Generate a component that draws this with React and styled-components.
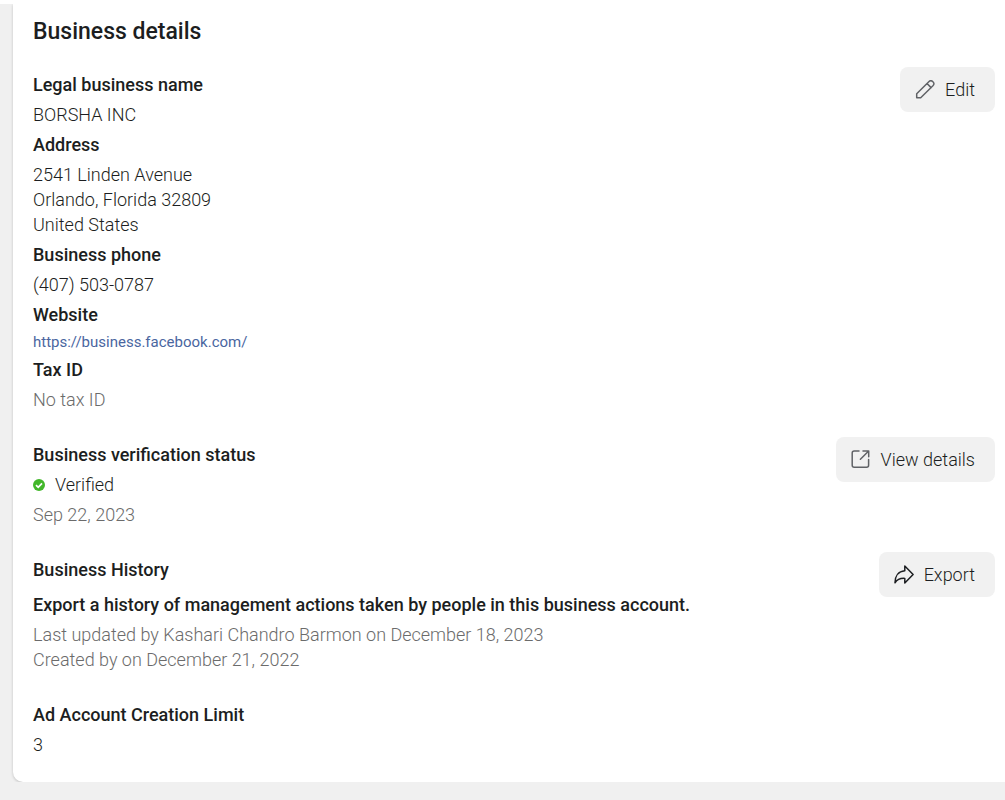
import React from 'react'
import styled, { createGlobalStyle } from 'styled-components'

const App = () => {
  return (
    <>
      <GlobalStyle />
      <Page>
        <Card>
          <Title>Business details</Title>

          <Sections>
            <Section>
              <Details>
                <Label>Legal business name</Label>
                <Text>BORSHA INC</Text>
                <Label>Address</Label>
                <Text>
                  2541 Linden Avenue<br />
                  Orlando, Florida 32809<br />
                  United States
                </Text>
                <Label>Business phone</Label>
                <Text>(407) 503-0787</Text>
                <Label>Website</Label>
                <WebLink href="https://business.facebook.com/">https://business.facebook.com/</WebLink>
                <Label>Tax ID</Label>
                <Text $muted>No tax ID</Text>
              </Details>
              <Button type="button">
                <PencilIcon />
                Edit
              </Button>
            </Section>

            <Section>
              <Details>
                <Label>Business verification status</Label>
                <Status>
                  <VerifiedIcon />
                  Verified
                </Status>
                <Text $muted>Sep 22, 2023</Text>
              </Details>
              <Button type="button">
                <OpenIcon />
                View details
              </Button>
            </Section>

            <Section>
              <Details>
                <Label>Business History</Label>
                <Lead>Export a history of management actions taken by people in this business account.</Lead>
                <Text $muted>
                  Last updated by Kashari Chandro Barmon on December 18, 2023<br />
                  Created by on December 21, 2022
                </Text>
              </Details>
              <Button type="button">
                <ShareIcon />
                Export
              </Button>
            </Section>

            <Section>
              <Details>
                <Label>Ad Account Creation Limit</Label>
                <Text>3</Text>
              </Details>
            </Section>
          </Sections>
        </Card>
      </Page>
    </>
  )
}

const PencilIcon = () => (
  <Icon viewBox="0 0 20 20" aria-hidden="true" $color="#606266">
    <path d="M1.7 17.8v-4.1L13.8 1.7q2-1.9 4.1 0t0 4.1L5.7 17.8zM12 3.5l4.1 4.1" />
  </Icon>
)

const OpenIcon = () => (
  <Icon viewBox="0 0 20 20" aria-hidden="true" $color="#606266">
    <path d="M8 1H3.200Q1.200 1 1.200 3v12.300q0 2 2 2h12.400q2 0 2-2V9.500M12 1h5.700v5.700M17.700 1l-8.300 8.300" />
  </Icon>
)

const ShareIcon = () => (
  <Icon viewBox="0 0 20 20" aria-hidden="true" $color="#1c1e21">
    <path d="M10.8 1l8.3 8.500-8.300 8.500v-4.600C5.800 13.100 3.200 14.300 1 17.800 1 11 4.500 6.300 10.800 5.800z" />
  </Icon>
)

const VerifiedIcon = () => (
  <Badge viewBox="0 0 12 12" aria-hidden="true">
    <circle cx="6" cy="6" r="6" fill="#42b72a" />
    <path d="M3 6.2l2.200 2.100L9 4.300" fill="none" stroke="#fff" strokeWidth="1.7" />
  </Badge>
)

const GlobalStyle = createGlobalStyle`
  body {
    margin: 0;
    background-color: #f0f0f0;
    font-family: Roboto, "Liberation Sans", sans-serif;
    color: #1c1e21;
  }
`

const Page = styled.main`
  border-top: 4px solid #ffffff;
  padding-left: 13px;
`

const Card = styled.div`
  padding: 15px 10px 25px 20px;
  border-radius: 0 0 0 10px;
  background-color: #ffffff;
  box-shadow: 0 1px 3px rgb(0 0 0 / 20%);
  clip-path: inset(0 0 -6px -6px);
`

const Title = styled.h1`
  margin: 0 0 22px;
  font-size: 23px;
  font-weight: 500;
  line-height: 26px;
`

const Sections = styled.div`
  display: flex;
  flex-direction: column;
  gap: 25px;
`

const Section = styled.section`
  display: flex;
  align-items: flex-start;
  justify-content: space-between;
  gap: 20px;
`

const Details = styled.div`
  display: flex;
  flex-direction: column;
  align-items: flex-start;
  gap: 5px;
  padding-top: 5px;
`

const Label = styled.h2`
  margin: 0;
  font-size: 18px;
  font-weight: 500;
  line-height: 25px;
`

const Lead = styled.p`
  margin: 5px 0 0;
  font-size: 18px;
  font-weight: 500;
  line-height: 25px;
`

const Text = styled.p`
  margin: 0;
  font-size: 18px;
  font-weight: 300;
  line-height: 25px;
  color: ${(props) => (props.$muted ? '#6b6b6b' : '#1c1e21')};
`

const Status = styled(Text)`
  display: flex;
  align-items: center;
  gap: 10px;
`

const WebLink = styled.a`
  font-size: 15px;
  line-height: 20px;
  color: #4a669f;
  text-decoration: none;
  &:hover {
    text-decoration: underline;
  }
`

const Button = styled.button`
  display: flex;
  align-items: center;
  flex-shrink: 0;
  gap: 10px;
  height: 45px;
  padding: 0 20px 0 15px;
  border: none;
  border-radius: 8px;
  background-color: #f1f1f1;
  font-family: inherit;
  font-size: 18px;
  font-weight: 300;
  color: #1c1e21;
  cursor: pointer;
  &:hover {
    background-color: #e6e6e6;
  }
`

const Icon = styled.svg`
  width: 20px;
  height: 20px;
  fill: none;
  stroke: ${(props) => props.$color};
  stroke-width: 1.5;
  stroke-linejoin: round;
  stroke-linecap: round;
`

const Badge = styled.svg`
  width: 12px;
  height: 12px;
`

export default App
